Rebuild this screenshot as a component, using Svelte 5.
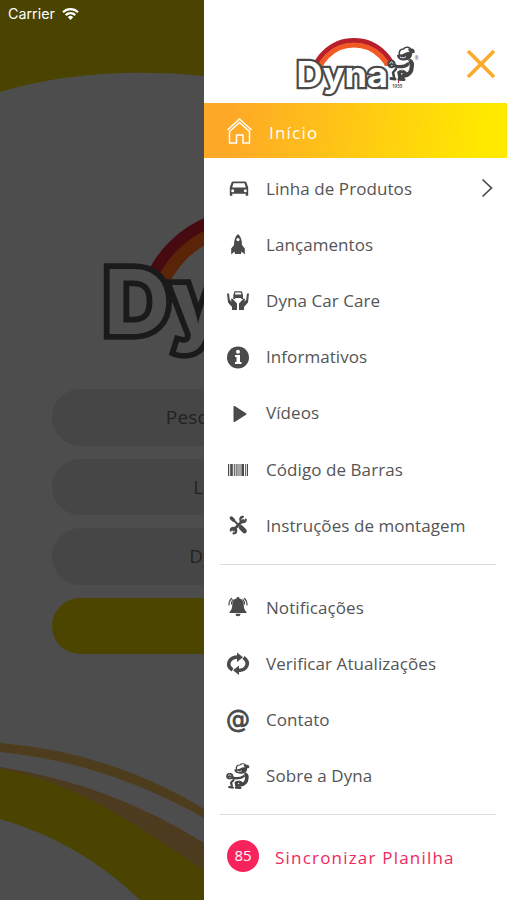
<script lang="ts">
  type Item = { icon: string; label: string; arrow?: boolean };

  const mainItems: Item[] = [
    { icon: 'home', label: 'Início' },
    { icon: 'car', label: 'Linha de Produtos', arrow: true },
    { icon: 'rocket', label: 'Lançamentos' },
    { icon: 'care', label: 'Dyna Car Care' },
    { icon: 'info', label: 'Informativos' },
    { icon: 'play', label: 'Vídeos' },
    { icon: 'barcode', label: 'Código de Barras' },
    { icon: 'tools', label: 'Instruções de montagem' },
  ];

  const extraItems: Item[] = [
    { icon: 'bell', label: 'Notificações' },
    { icon: 'sync', label: 'Verificar Atualizações' },
    { icon: 'at', label: 'Contato' },
    { icon: 'mascot', label: 'Sobre a Dyna' },
  ];

  const homeButtons = ['Pesquisar Produtos', 'Lançamentos', 'Dyna Car Care'];

  let active = $state('Início');
  let pending = $state(85);
</script>

<!-- Mascot, drawn in a 28x34 box -->
{#snippet mascot()}
  <g fill="none" stroke="#444" stroke-linecap="round" stroke-linejoin="round">
    <path d="M23 14c3 2 2 5 1.500 7 0 3-1 5-4.500 7l-4 1" stroke-width="4.200" />
    <path d="M21 17c-3 3-7 3-11 2.500l-4-1.500" stroke-width="3.200" />
    <path d="M20 28c-3-4-6-4.500-8-2.500l1 5" stroke-width="3.600" />
    <path d="M9 22l-3 3.500 1 4.500" stroke-width="2.600" />
    <path d="M4 31.500l4 .5M12 32.300l5 .3" stroke-width="3" />
    <path d="M12.500 8c-1-4 1-6 4-6 2-2.500 6-2 7 0 2 0 3.500 1 3.500 3" stroke-width="1.600" />
  </g>
  <path d="M10 8c3-1 5 0 7-1.500s5-2 8-1c1 5-3 8-8 8-4 0-7-2-7-5.500z" fill="#444" />
  <path d="M21 1.500c3 0 5.500 1.500 6.500 4-2 1.500-4 1-5.500-1z" fill="#444" />
  <circle cx="4.500" cy="17" r="4.200" fill="#444" />
  <path
    d="M2.500 16.500l2-1.500 1.800 1.500M4 19l1.500-.6M13 10c2 1.200 4.500 1 6-.4M11 23.500l2-1 3 .5M22.500 13.500l-1.500 1.200"
    fill="none"
    stroke="#eee"
    stroke-width="1"
  />
{/snippet}

{#snippet logo()}
  <svg class="logo" viewBox="294 36 126 62">
    <path class="arc-outer" d="M311.500 83a42.500 42.500 0 0 1 85 0" />
    <path class="arc-inner" d="M316 83a38 38 0 0 1 76 0" />
    <rect x="300" y="66" width="98" height="20" fill="var(--logo-bg)" />
    <text class="wordmark" x="296.500" y="87" textLength="91.500" lengthAdjust="spacingAndGlyphs">Dyna</text>
    <g transform="translate(387 47)">{@render mascot()}</g>
    <text class="reg" x="414.500" y="60">®</text>
    <text class="since" x="392" y="88">1955</text>
  </svg>
{/snippet}

{#snippet icon(name: string)}
  <svg class="icon" viewBox="0 0 28 28" fill="#4a4a4a">
    {#if name === 'home'}
      <g fill="none" stroke="#fff" stroke-width="1.500" stroke-linejoin="round" stroke-linecap="round">
        <path d="M3 12.500L14.500 2 26 12.500M4.500 14.500l10-9 10 9V26H18v-8h-6.500v8h-7z" />
      </g>
    {:else if name === 'car'}
      <path
        fill-rule="evenodd"
        d="M9 7.500h12c.8 0 1.200.4 1.500 1l1.700 5v8.300h-2.500v-2H8.300v2H5.800v-8.300l1.700-5c.3-.6.700-1 1.500-1zM9.500 9.200l-1.300 4.300h13.600l-1.300-4.300zM8.700 15.200a1.500 1.500 0 1 0 0 3 1.500 1.500 0 0 0 0-3zm12.600 0a1.500 1.500 0 1 0 0 3 1.500 1.500 0 0 0 0-3z"
      />
    {:else if name === 'rocket'}
      <path
        fill-rule="evenodd"
        d="M14 4c2.800 2.500 4 6 4 11l2.800 3.500v6L17.500 21.500l-.5 2.500h-6l-.5-2.500-3.300 3v-6L10 15c0-5 1.200-8.500 4-11zm0 4a1.600 1.600 0 1 0 0 3.200A1.600 1.600 0 0 0 14 8z"
      />
    {:else if name === 'care'}
      <path d="M9.300 13V9l1.200-3.800h7.300L19 9v4h-1.800v-1h-6v1zM10.800 8.500h6.700l-.7-2h-5.300z" fill-rule="evenodd" />
      <path
        d="M3 7.500h2l.8 6.500 2 1.500-1-2.500 1.500-.5 4.700 5v6.500H8v-3l-4-4.500zM25 7.500h-2l-.8 6.500-2 1.500 1-2.500-1.500-.5-4.700 5v6.500h5v-3l4-4.500z"
      />
    {:else if name === 'info'}
      <circle cx="14" cy="14.500" r="11" />
      <circle cx="14" cy="8.700" r="2" fill="#fff" />
      <path d="M11 12h5v7h1.500v2H11v-2h1.500v-5H11z" fill="#fff" />
    {:else if name === 'play'}
      <path d="M9.500 7.700v14.600c0 .8.600 1 1.200.6l11.300-7.200c.6-.4.600-1 0-1.400L10.700 7.100c-.6-.4-1.200-.2-1.200.6z" />
    {:else if name === 'barcode'}
      <path
        d="M4 9h1.200v12H4zM6.200 9h2.600v12H6.200zM9.800 9h1v12h-1zM11.700 9h1v12h-1zM13.500 9h1v12h-1zM15.500 9h1v12h-1zM17.400 9H20v12h-2.600zM21 9h.8v12H21zM22.800 9H24v12h-1.200z"
      />
    {:else if name === 'tools'}
      <g fill="none" stroke="#4a4a4a" stroke-linecap="round">
        <path d="M9.500 19l9.500-9.500" stroke-width="2.800" />
        <path d="M8 7.500l6 6" stroke-width="2" />
        <path d="M17 16.500l3.500 3.500" stroke-width="4.600" />
        <path d="M7.300 7l2 2" stroke-width="3.400" />
        <path d="M21.700 8.500a2.700 2.700 0 1 1-2.800-2.700M6.800 19.500a2.700 2.700 0 1 1 2.700 2.800" stroke-width="2.200" />
      </g>
    {:else if name === 'bell'}
      <path d="M14 4c.9 0 1.300.5 1.300 1.200 3.200.8 4.400 3.200 4.400 6 0 4 .7 5.600 2.800 7.800v1h-17v-1c2.100-2.200 2.800-3.800 2.800-7.800 0-2.800 1.200-5.200 4.400-6C12.700 4.500 13.100 4 14 4zM11.500 20.800h5a2.500 2.500 0 0 1-5 0z" />
      <g fill="none" stroke="#4a4a4a" stroke-width="1.200" stroke-linecap="round">
        <path d="M5 12c0-2.500.8-5 2.500-6.500M7.500 11c0-1.800.5-3.200 1.500-4.500M23 12c0-2.500-.8-5-2.500-6.500M20.500 11c0-1.800-.5-3.200-1.500-4.500" />
      </g>
    {:else if name === 'sync'}
      <g fill="none" stroke="#4a4a4a" stroke-width="3.600">
        <path d="M8.500 20C1.500 15 5 7 14 7M19.500 7.500C26.500 12.500 23 20.500 14 20.500" />
      </g>
      <path d="M13 2.500l6 4.700-6 4.800zM15 15.500V25l-6-4.700z" />
    {:else if name === 'at'}
      <text class="at-sign" x="14" y="21.500" text-anchor="middle">@</text>
    {:else if name === 'mascot'}
      <g transform="translate(2 1.500) scale(.84 .75)">{@render mascot()}</g>
    {/if}
  </svg>
{/snippet}

{#snippet row(item: Item)}
  <li>
    <button class="item" class:active={active === item.label} onclick={() => (active = item.label)}>
      {@render icon(item.icon)}
      <span class="label">{item.label}</span>
      {#if item.arrow}
        <svg class="chevron" viewBox="0 0 12 20">
          <path d="M1.500 1.500L10.500 10l-9 8.500" fill="none" stroke="#4a4a4a" stroke-width="1.700" />
        </svg>
      {/if}
    </button>
  </li>
{/snippet}

<div class="screen">
  <!-- Home page, dimmed behind the open drawer -->
  <main class="home">
    <svg class="waves" viewBox="0 0 507 900">
      <path d="M0 0h507v154Q400 100 204 76Q90 65 0 92z" fill="#4b4400" />
      <path d="M0 743Q110 752 204 809v9Q105 762 0 752z" fill="#4d3d1c" />
      <path d="M0 767Q110 784 204 843v30Q110 800 0 770z" fill="#4c3b1e" />
      <path d="M0 769C75 782 130 820 204 871V900H140Q80 842 0 819z" fill="#4b4400" />
    </svg>
    <div class="home-logo">{@render logo()}</div>
    <div class="home-buttons">
      {#each homeButtons as label}
        <button class="pill">{label}</button>
      {/each}
      <button class="pill yellow" aria-label="Contato"></button>
    </div>
  </main>

  <div class="status">
    <span>Carrier</span>
    <svg width="17" height="12" viewBox="0 0 17 12">
      <g fill="none" stroke="#fff" stroke-width="2.200">
        <path d="M1 4.200a10.700 10.700 0 0 1 15 0M3.700 7.100a6.800 6.800 0 0 1 9.600 0" />
      </g>
      <path d="M5.800 9.200a3.800 3.800 0 0 1 5.400 0L8.500 12z" fill="#fff" />
    </svg>
  </div>

  <aside class="drawer">
    <header>
      {@render logo()}
      <button class="close" aria-label="Fechar">
        <svg width="30" height="30" viewBox="0 0 30 30">
          <path d="M2 2l26 26M28 2L2 28" stroke="#fdaa29" stroke-width="3.600" />
        </svg>
      </button>
    </header>

    <ul>
      {#each mainItems as item}
        {@render row(item)}
      {/each}
    </ul>
    <hr />
    <ul class="extra">
      {#each extraItems as item}
        {@render row(item)}
      {/each}
    </ul>
    <hr />
    <button class="sync-sheet" onclick={() => (pending = 0)}>
      <span class="badge">{pending}</span>
      <span class="sync-label">Sincronizar Planilha</span>
    </button>
  </aside>
</div>

<style>
  :global(body) {
    margin: 0;
    background: #4d4d4d;
  }

  .screen {
    position: relative;
    display: flex;
    justify-content: flex-end;
    height: 900px;
    overflow: hidden;
    font-family: 'Open Sans', 'Noto Sans', sans-serif;
    color: #555;
  }

  button {
    margin: 0;
    padding: 0;
    border: none;
    background: none;
    font: inherit;
    color: inherit;
    cursor: pointer;
  }

  .home {
    --logo-bg: #4d4d4d;
    --logo-edge: #1a1a1a;
    --arc-outer: #470a10;
    --arc-inner: #5a2409;
    position: absolute;
    inset: 0;
    box-sizing: border-box;
    padding: 203px 52px 0;
    background: #4d4d4d;
  }

  .waves {
    position: absolute;
    inset: 0;
  }

  .home-logo {
    position: relative;
    height: 159px;
    margin-left: 45px;
  }

  .home-logo .logo {
    width: 323px;
    height: 159px;
  }

  .home-buttons {
    position: relative;
    display: flex;
    flex-direction: column;
    gap: 13px;
    margin-top: 27px;
  }

  .pill {
    height: 56.600px;
    border-radius: 29px;
    background: #464646;
    color: #222;
    font-size: 19px;
    letter-spacing: 0.150px;
  }

  .yellow {
    background: #4c4500;
  }

  .status {
    position: absolute;
    top: 5px;
    left: 8px;
    display: flex;
    align-items: center;
    gap: 7px;
    color: #fff;
    font: 14.300px/18px Inter, 'Liberation Sans', sans-serif;
  }

  .drawer {
    --logo-bg: #fff;
    --logo-edge: #4a4a4a;
    --arc-outer: #b91f2b;
    --arc-inner: #f15a24;
    position: relative;
    width: 303px;
    height: 900px;
    background: #fff;
  }

  header {
    display: flex;
    align-items: center;
    justify-content: space-between;
    box-sizing: border-box;
    height: 103px;
    padding: 31px 11px 0 90px;
  }

  .logo {
    display: block;
    width: 126px;
    height: 62px;
  }

  .arc-outer,
  .arc-inner {
    fill: none;
    stroke: var(--arc-outer);
    stroke-width: 5;
  }

  .arc-inner {
    stroke: var(--arc-inner);
  }

  .wordmark {
    font: 700 35px Inter, sans-serif;
    fill: var(--logo-bg);
    stroke: var(--logo-edge);
    stroke-width: 4.400px;
    paint-order: stroke;
  }

  .reg {
    font: 5px 'Open Sans', sans-serif;
    fill: #555;
  }

  .since {
    font: bold 4.500px 'Open Sans', sans-serif;
    fill: #666;
  }

  .close {
    display: flex;
    margin-top: -6px;
  }

  ul {
    margin: 0;
    padding: 0;
    list-style: none;
  }

  .item {
    display: flex;
    align-items: center;
    box-sizing: border-box;
    width: 100%;
    height: 56.200px;
    padding: 4px 14px 0 20px;
    font-size: 17px;
    letter-spacing: 0.070px;
    text-align: left;
  }

  .icon {
    width: 28px;
    height: 28px;
    margin-right: 14px;
    overflow: visible;
  }

  .label {
    flex: 1;
  }

  .active {
    height: 55px;
    padding-left: 21px;
    background: linear-gradient(97deg, #fea827 8%, #ffe900 92%);
    color: #fff;
    font-weight: 500;
    letter-spacing: 1.200px;
  }

  .active .icon {
    margin: -4px 16px 0 0;
  }

  .chevron {
    width: 12px;
    height: 20px;
  }

  .at-sign {
    font: 24px 'DejaVu Sans', sans-serif;
    stroke: #4a4a4a;
    stroke-width: 0.800px;
  }

  hr {
    height: 1px;
    margin: 13px 11px 0 16px;
    border: none;
    background: #dadada;
  }

  .extra {
    padding-top: 12px;
  }

  .extra + hr {
    margin-top: 12px;
  }

  .sync-sheet {
    display: flex;
    align-items: center;
    gap: 16px;
    margin: 25px 0 0 23px;
    color: #ee2a5d;
    font-size: 17px;
    font-weight: 500;
    letter-spacing: 1.200px;
  }

  .sync-label {
    padding-top: 2px;
  }

  .badge {
    width: 32px;
    height: 32px;
    border-radius: 50%;
    background: #f8235c;
    color: #fff;
    font-size: 15px;
    font-weight: 400;
    line-height: 31px;
    letter-spacing: 0;
    text-align: center;
  }
</style>
